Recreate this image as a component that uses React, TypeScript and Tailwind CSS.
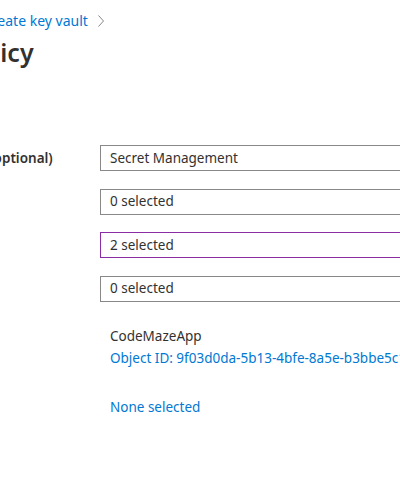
import React from 'react';

const rows = [
  { label: 'Configure from template (optional)', value: 'Secret Management', active: false },
  { label: 'Key permissions', value: '0 selected', active: false },
  { label: 'Secret permissions', value: '2 selected', active: true },
  { label: 'Certificate permissions', value: '0 selected', active: false },
];

const Chevron: React.FC = () => (
  <svg width="8" height="14" viewBox="0 0 8 14" className="text-[#8a8886]">
    <path d="M1.5 1.5 L6.5 7 L1.5 12.5" fill="none" stroke="currentColor" strokeWidth="1" />
  </svg>
);

export default function App() {
  return (
    <div className="w-[400px] h-[486px] overflow-hidden bg-white text-[#323130] font-['Noto_Sans',sans-serif]">
      {/* Breadcrumb */}
      <div className="-ml-[17px] pt-[11px] flex items-center gap-[9px] h-[31px] text-[14px] leading-5">
        <span className="text-[#0078d4] whitespace-nowrap">Create key vault</span>
        <Chevron />
      </div>

      <div className="-ml-[178px] w-[700px]">
        {/* Title */}
        <h1 className="mt-[5px] text-[25px] leading-8 font-semibold whitespace-nowrap">Add access policy</h1>

        {/* Form */}
        <div className="mt-[77px] flex flex-col gap-[17.5px]">
          {rows.map((r) => (
            <div key={r.label} className="flex items-center h-[26px]">
              <label className="w-[278px] shrink-0 text-[13.5px] font-semibold whitespace-nowrap">
                {r.label}
              </label>
              <div
                className={`flex-1 h-[26px] flex items-center pl-[9px] text-[13.5px] border ${
                  r.active ? 'border-[#8a2da5]' : 'border-[#8a8886]'
                }`}
              >
                {r.value}
              </div>
            </div>
          ))}
        </div>

        <div className="flex mt-[23px]">
          <label className="w-[278px] shrink-0 text-[13.5px] leading-[22px] font-semibold">
            Select principal
          </label>
          <div className="pl-[10px] text-[13.5px] leading-[22px] whitespace-nowrap">
            <div>CodeMazeApp</div>
            <div className="text-[#0078d4]">Object ID: 9f03d0da-5b13-4bfe-8a5e-b3bbe5c1a2f4</div>
          </div>
        </div>

        <div className="flex mt-[28px]">
          <label className="w-[278px] shrink-0 text-[13.5px] leading-5 font-semibold">
            Authorized application
          </label>
          <div className="pl-[10px] text-[13.5px] leading-5 text-[#0078d4]">None selected</div>
        </div>
      </div>
    </div>
  );
}
